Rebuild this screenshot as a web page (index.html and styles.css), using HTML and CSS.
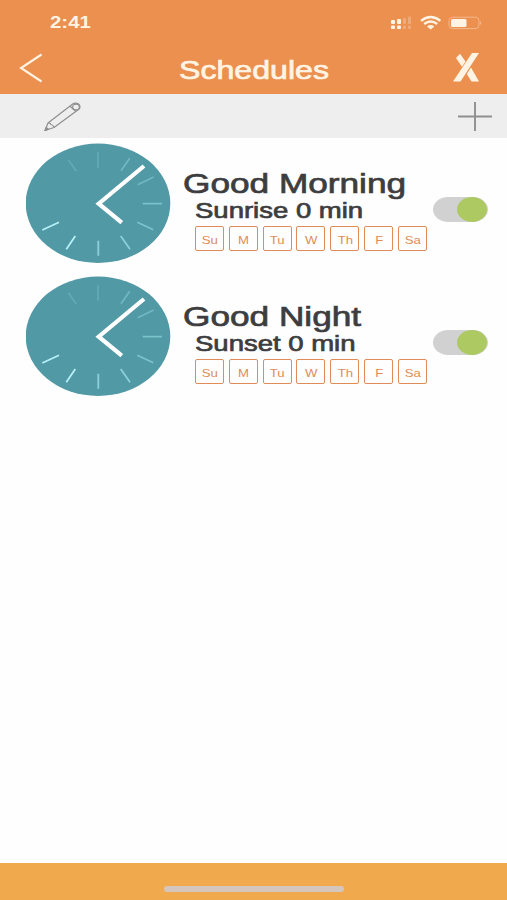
FILE: index.html
```html
<!DOCTYPE html>
<html lang="en">

<head>
    <meta charset="UTF-8">
    <title>Schedules</title>
    <link rel="stylesheet" href="styles.css">
</head>

<body>
    <svg class="defs" width="0" height="0">
        <symbol id="clock" viewBox="0 0 145 120">
            <ellipse cx="72" cy="60.3" rx="72.3" ry="59.7" fill="#5299a6" />
            <g stroke="#9fe3ea" stroke-width="1.8" fill="none">
                <path d="M72 9.3V24.7M42.3 16.7L50.3 28" opacity=".22" />
                <path d="M95 27.7L103.7 15.3M111.7 41.7L127.7 34" opacity=".4" />
                <path d="M116.7 60.7H136M111.3 79.3L127.3 86.7" opacity=".55" />
                <path d="M94.7 93L104 106.3M72.3 97.7V112.7" opacity=".75" />
                <path d="M49.3 93L40.3 106.3M33 79.3L16.3 87" stroke="#b5f0f8" />
            </g>
            <path d="M118 23L72.7 60.7L95.8 79.6" stroke="#fff" stroke-width="4.2" fill="none" />
        </symbol>
    </svg>

    <header class="header">
        <div class="status-bar">
            <span class="time"><span class="wide">2:41</span></span>
            <svg class="status-icons" width="92" height="16" viewBox="0 0 92 16">
                <g fill="#fff4e4">
                    <rect x="1" y="5" width="4" height="4" rx="1" />
                    <rect x="7" y="4" width="4" height="5" rx="1" />
                    <rect x="1" y="10.5" width="4" height="3.5" rx="1" />
                    <rect x="7" y="10.5" width="4" height="3.5" rx="1" />
                </g>
                <g fill="#f0aa79">
                    <rect x="13" y="3" width="3" height="6" rx="1" />
                    <rect x="18" y="1.5" width="3" height="7.5" rx="1" />
                    <rect x="13" y="10.5" width="3" height="3.5" rx="1" />
                    <rect x="18" y="10.5" width="3" height="3.5" rx="1" />
                </g>
                <g fill="none" stroke="#fff4e4" stroke-width="2.3">
                    <path d="M31 5.8Q40.7 -1.8 50.4 5.8" />
                    <path d="M34.2 9Q40.7 4 47.2 9" />
                </g>
                <path d="M37 11.4Q40.7 8.6 44.4 11.4L40.7 14.4Z" fill="#fff4e4" />
                <rect x="59" y="2.2" width="30" height="11.4" rx="3.5" fill="none" stroke="#f4b88d" />
                <rect x="61" y="4" width="15.5" height="8" rx="1.5" fill="#fff4e4" />
                <path d="M90 6Q92.5 8 90 10Z" fill="#f4b88d" />
            </svg>
        </div>
        <div class="nav-bar">
            <svg class="back" width="24" height="30" viewBox="0 0 24 30">
                <path d="M22.5 1.5L2 15L22.5 28.5" fill="none" stroke="#fff4e4" stroke-width="2.1" />
            </svg>
            <h1 class="title"><span class="wide">Schedules</span></h1>
            <svg class="logo" width="28" height="30" viewBox="0 0 28 30">
                <path d="M20 0H27L8.5 28.5H1ZM4 5L8 .8L13.5 8.5L10 13.7ZM14.8 21L19 14.5L27 28.5H19.5Z" fill="#fff4e4" />
            </svg>
        </div>
    </header>

    <div class="toolbar">
        <svg class="edit" width="38" height="30" viewBox="0 0 38 30" fill="none" stroke="#8f8f8f" stroke-width="1.2" stroke-linejoin="round">
            <path d="M1 28.5L4 21L28 2.5Q31.500 .2 34.5 2Q37.5 4.500 34.500 7.500L10 25.500Z" />
            <path d="M4 21Q6 20.500 7 22.500Q9.500 23 10 25.500M26 4.200L31.800 9.300" />
            <ellipse cx="32" cy="5" rx="3.400" ry="2.900" />
            <path d="M1 28.500L2.200 25.500L4.500 27.200Z" fill="#8f8f8f" />
        </svg>
        <svg class="add" width="34" height="30" viewBox="0 0 34 30">
            <path d="M0 14.500H34M17 0V29" fill="none" stroke="#8f8f8f" stroke-width="1.900" />
        </svg>
    </div>

    <main class="schedules">
        <section class="schedule">
            <svg class="clock" width="145" height="120"><use href="#clock" /></svg>
            <div class="info">
                <h2 class="name"><span class="wide">Good Morning</span></h2>
                <p class="trigger"><span class="wide">Sunrise 0 min</span></p>
                <div class="days">
                    <span class="day"><span class="wide">Su</span></span>
                    <span class="day"><span class="wide">M</span></span>
                    <span class="day"><span class="wide">Tu</span></span>
                    <span class="day"><span class="wide">W</span></span>
                    <span class="day"><span class="wide">Th</span></span>
                    <span class="day"><span class="wide">F</span></span>
                    <span class="day"><span class="wide">Sa</span></span>
                </div>
            </div>
            <div class="toggle"><span class="thumb"></span></div>
        </section>

        <section class="schedule">
            <svg class="clock" width="145" height="120"><use href="#clock" /></svg>
            <div class="info">
                <h2 class="name"><span class="wide">Good Night</span></h2>
                <p class="trigger"><span class="wide">Sunset 0 min</span></p>
                <div class="days">
                    <span class="day"><span class="wide">Su</span></span>
                    <span class="day"><span class="wide">M</span></span>
                    <span class="day"><span class="wide">Tu</span></span>
                    <span class="day"><span class="wide">W</span></span>
                    <span class="day"><span class="wide">Th</span></span>
                    <span class="day"><span class="wide">F</span></span>
                    <span class="day"><span class="wide">Sa</span></span>
                </div>
            </div>
            <div class="toggle"><span class="thumb"></span></div>
        </section>
    </main>

    <footer class="footer">
        <div class="home-indicator"></div>
    </footer>
</body>

</html>
```
FILE: styles.css
```css
* {
    box-sizing: border-box;
}

body {
    margin: 0;
    height: 900px;
    display: flex;
    flex-direction: column;
    overflow: hidden;
    font-family: "Liberation Sans", Arial, sans-serif;
    background-color: #fefefe;
}

h1,
h2,
p {
    margin: 0;
    font-weight: normal;
    white-space: nowrap;
}

svg {
    display: block;
    flex-shrink: 0;
}

.defs {
    display: none;
}

/* extended lettering */
.wide {
    display: inline-block;
    transform: scaleX(1.28);
    transform-origin: left center;
}

.header {
    height: 94px;
    background-color: #eb904e;
    color: #fff4e4;
}

.status-bar {
    display: flex;
    justify-content: space-between;
    height: 46px;
    padding: 13px 25px 0 50px;
}

.time {
    font-size: 17px;
    line-height: 20px;
    font-weight: bold;
}

.time .wide {
    transform: scaleX(1.2);
}

.status-icons {
    margin-top: 2px;
}

.nav-bar {
    display: flex;
    justify-content: space-between;
    height: 48px;
    padding: 7px 27px 0 19px;
}

.title {
    width: 150px;
    margin-left: 13px;
    font-size: 25.5px;
    line-height: 34px;
    -webkit-text-stroke: 0.7px #fff4e4;
}

.title .wide {
    transform: scaleX(1.26);
}

.toolbar {
    display: flex;
    justify-content: space-between;
    height: 44px;
    padding: 8px 15px 0 44px;
    background-color: #eeeeee;
}

.schedules {
    flex: 1;
    padding-top: 5px;
}

.schedule {
    display: flex;
    height: 133px;
    padding-left: 26px;
}

.info {
    width: 249px;
    margin-left: 12px;
    padding-top: 25px;
    color: #3d3d3f;
}

.name {
    font-size: 27.5px;
    line-height: 32px;
    -webkit-text-stroke: 0.7px #3d3d3f;
}

.trigger {
    padding-left: 12px;
    font-size: 22px;
    line-height: 22px;
    -webkit-text-stroke: 0.7px #3d3d3f;
}

.trigger .wide {
    transform: scaleX(1.25);
}

.days {
    display: flex;
    gap: 4.8px;
    margin-top: 4px;
    padding-left: 12px;
}

.day {
    width: 29px;
    height: 25px;
    display: flex;
    justify-content: center;
    align-items: center;
    padding: 2px 0 0 1px;
    border: 1px solid #e08c59;
    border-radius: 2px;
    font-size: 11px;
    color: #df8c58;
}

.day .wide {
    transform: scaleX(1.2);
    transform-origin: center;
}

.toggle {
    width: 55px;
    height: 25px;
    margin: 54px 0 0 1px;
    border-radius: 15px / 12.5px;
    background-color: #d1d1d1;
}

.thumb {
    display: block;
    width: 30px;
    height: 25px;
    margin-left: 24px;
    border-radius: 50%;
    background-color: #adc962;
}

.footer {
    height: 37px;
    padding-top: 23px;
    background-color: #f0a94c;
}

.home-indicator {
    width: 180px;
    height: 6px;
    margin: 0 auto;
    border-radius: 3px;
    background-color: #d5c6bd;
}
```
